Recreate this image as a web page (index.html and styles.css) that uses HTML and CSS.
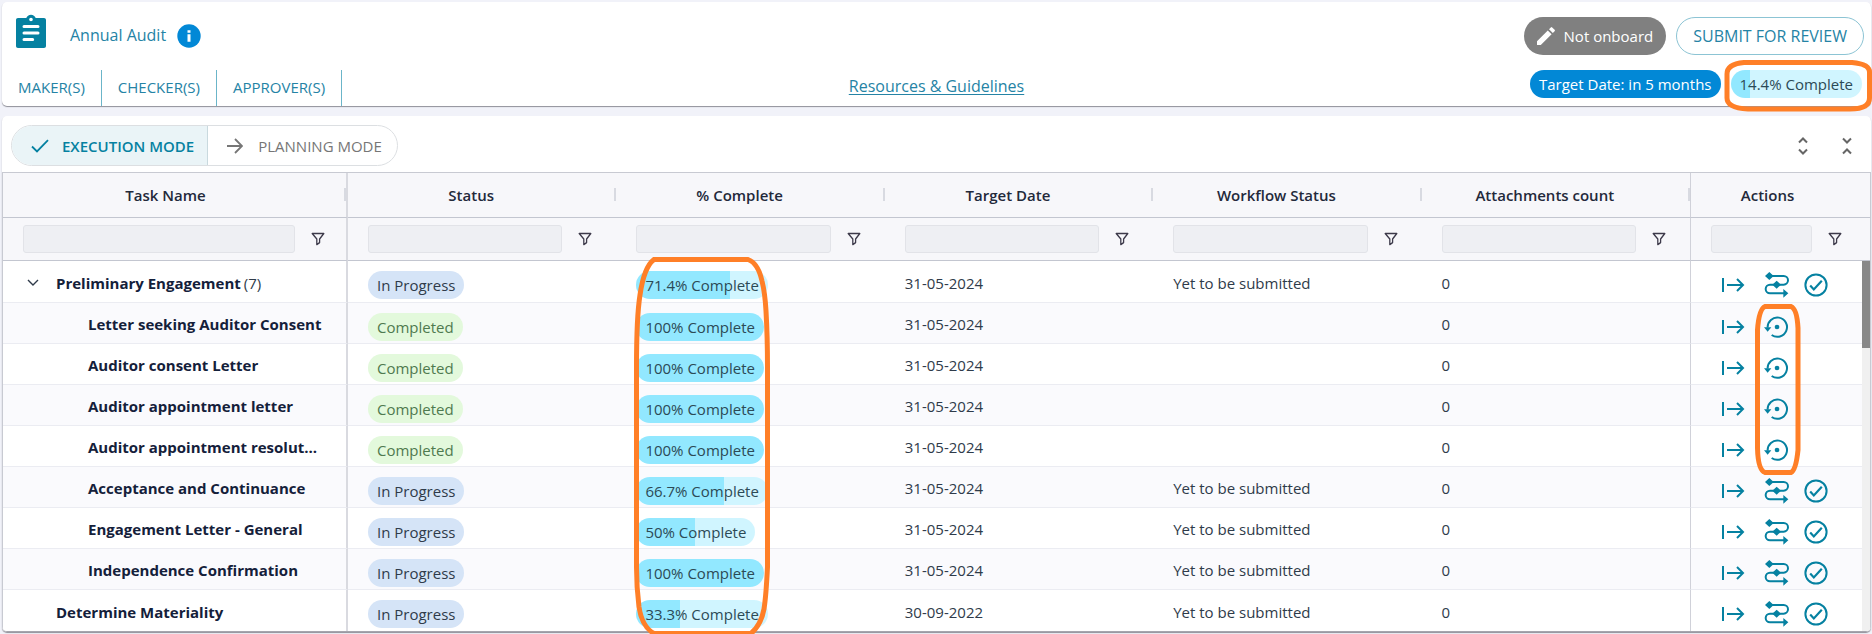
FILE: index.html
```html
<!DOCTYPE html>
<html lang="en">
<head>
  <meta charset="UTF-8" />
  <meta name="viewport" content="width=device-width, initial-scale=1" />
  <title>Annual Audit</title>
  <link rel="stylesheet" href="styles.css">
</head>
<body>

  <!-- icons -->
  <svg class="sprite" aria-hidden="true">
    <symbol id="i-filter" viewBox="0 0 14 14">
      <path d="M1.2 1.5h11.6L8.6 7v3.6L5.8 12.6V7z" fill="none" stroke="currentColor" stroke-width="1.3" stroke-linejoin="round"/>
    </symbol>
    <symbol id="i-start" viewBox="0 0 24 16">
      <path d="M2 1v14M6 8h16M16 2l6 6-6 6" fill="none" stroke="currentColor" stroke-width="2"/>
    </symbol>
    <symbol id="i-route" viewBox="-3 -1 78 78">
      <path d="M13 11h43a13 13 0 0 1 0 26H15a13 13 0 0 0 0 26h43" fill="none" stroke="currentColor" stroke-width="6"/>
      <path d="M13 -1l13 12-13 12L0 11zM35 25l13 12-13 12-13-12zM55 50l15 13-15 13z" fill="currentColor"/>
    </symbol>
    <symbol id="i-check" viewBox="-1 -1 26 26">
      <circle cx="12" cy="12" r="10.6" fill="none" stroke="currentColor" stroke-width="2"/>
      <path d="M6.2 12.6l3.6 3.8 8-8.6" fill="none" stroke="currentColor" stroke-width="2.2"/>
    </symbol>
    <symbol id="i-restore" viewBox="1 -7 78 78">
      <path d="M12 34a29 29 0 1 1 12 22" fill="none" stroke="currentColor" stroke-width="6"/>
      <path d="M1 33h22L12 46z" fill="currentColor"/>
      <circle cx="40" cy="32" r="7" fill="currentColor"/>
    </symbol>
  </svg>

  <header class="card header">
    <div class="header-top">
      <svg class="logo" viewBox="0 0 24 24">
        <path d="M19.800 3h-4.980C14.400 1.840 13.300 1 12 1s-2.400.840-2.820 2H4.200C3.500 3 3 3.500 3 4.200v15.600c0 .700.500 1.200 1.200 1.200h15.600c.700 0 1.200-.500 1.200-1.200V4.200c0-.700-.500-1.200-1.200-1.200zM12 2.800a1.100 1.100 0 1 1 0 2.200 1.100 1.100 0 0 1 0-2.200z" fill="#0581a1" fill-rule="evenodd"/>
        <path d="M7.800 8.100h8.400M7.800 12h8.400M7.800 15.900h5.200" stroke="#fff" stroke-width="1.800" stroke-linecap="round"/>
      </svg>
      <h1>Annual Audit</h1>
      <svg class="info" viewBox="0 0 24 24" role="img" aria-label="Info">
        <circle cx="12" cy="12" r="11.700" fill="#0288d6"/>
        <path d="M10.500 6.200h3v2.600h-3zM10.500 10.200h3v7.600h-3z" fill="#fff"/>
      </svg>
      <div class="header-actions">
        <button class="btn btn-grey">
          <svg width="18" height="18" viewBox="0 0 18 18"><path d="M0 14.200V18h3.800L14.600 7.200l-3.800-3.800zM17.600 4.200a1 1 0 0 0 0-1.400L15.200.400a1 1 0 0 0-1.400 0L12 2.200 15.800 6z" fill="#fff"/></svg>
          Not onboard
        </button>
        <button class="btn btn-outline">SUBMIT FOR REVIEW</button>
      </div>
    </div>
    <div class="header-bottom">
      <nav class="roles">
        <button>MAKER(S)</button>
        <button>CHECKER(S)</button>
        <button>APPROVER(S)</button>
      </nav>
      <a class="resources" href="#">Resources &amp; Guidelines</a>
      <div class="header-chips">
        <span class="chip chip-date">Target Date: in 5 months</span>
        <span class="chip chip-pct" style="--pct: 14.4%">14.4% Complete</span>
      </div>
    </div>
  </header>

  <main class="card tasks">
    <div class="toolbar">
      <div class="modes">
        <button class="active">
          <svg width="18" height="14" viewBox="0 0 18 14"><path d="M1 7.500l5 5L17 1.200" fill="none" stroke="currentColor" stroke-width="1.800"/></svg>
          EXECUTION MODE
        </button>
        <button>
          <svg width="16" height="16" viewBox="0 0 16 16"><path d="M0 8h14.500M8 1l7 7-7 7" fill="none" stroke="currentColor" stroke-width="1.800"/></svg>
          PLANNING MODE
        </button>
      </div>
      <div class="expanders">
        <button aria-label="Expand all"><svg width="10" height="18" viewBox="0 0 10 18"><path d="M1 5.500l4-4 4 4M1 12.500l4 4 4-4" fill="none" stroke="currentColor" stroke-width="2"/></svg></button>
        <button aria-label="Collapse all"><svg width="10" height="18" viewBox="0 0 10 18"><path d="M1 1.500l4 4 4-4M1 16.500l4-4 4 4" fill="none" stroke="currentColor" stroke-width="2"/></svg></button>
      </div>
    </div>

    <div class="grid">
      <table>
        <colgroup>
          <col class="col-name"><col><col><col><col><col><col class="col-actions">
        </colgroup>
        <thead>
          <tr class="titles">
            <th>Task Name</th><th>Status</th><th>% Complete</th><th>Target Date</th><th>Workflow Status</th><th>Attachments count</th><th>Actions</th>
          </tr>
          <tr class="filters">
            <td><div class="filter"><input type="text" aria-label="Filter task name"><button aria-label="Open filter"><svg><use href="#i-filter"/></svg></button></div></td>
            <td><div class="filter"><input type="text" aria-label="Filter status"><button aria-label="Open filter"><svg><use href="#i-filter"/></svg></button></div></td>
            <td><div class="filter"><input type="text" aria-label="Filter % complete"><button aria-label="Open filter"><svg><use href="#i-filter"/></svg></button></div></td>
            <td><div class="filter"><input type="text" aria-label="Filter target date"><button aria-label="Open filter"><svg><use href="#i-filter"/></svg></button></div></td>
            <td><div class="filter"><input type="text" aria-label="Filter workflow status"><button aria-label="Open filter"><svg><use href="#i-filter"/></svg></button></div></td>
            <td><div class="filter"><input type="text" aria-label="Filter attachments count"><button aria-label="Open filter"><svg><use href="#i-filter"/></svg></button></div></td>
            <td><div class="filter"><input type="text" aria-label="Filter actions"><button aria-label="Open filter"><svg><use href="#i-filter"/></svg></button></div></td>
          </tr>
        </thead>
        <tbody>
          <tr class="parent">
            <td>
              <div class="task">
                <button class="toggle" aria-label="Collapse"><svg width="12" height="8" viewBox="0 0 12 8"><path d="M1 1l5 5 5-5" fill="none" stroke="currentColor" stroke-width="1.400"/></svg></button>
                <span class="name">Preliminary Engagement</span><span class="count">(7)</span>
              </div>
            </td>
            <td><span class="chip chip-progress">In Progress</span></td>
            <td><span class="chip chip-pct" style="--pct: 71.4%">71.4% Complete</span></td>
            <td>31-05-2024</td><td>Yet to be submitted</td><td>0</td>
            <td><div class="actions"><button aria-label="Open"><svg class="start"><use href="#i-start"/></svg></button><button aria-label="Workflow"><svg><use href="#i-route"/></svg></button><button aria-label="Complete"><svg><use href="#i-check"/></svg></button></div></td>
          </tr>
          <tr>
            <td><div class="task"><span class="name">Letter seeking Auditor Consent</span></div></td>
            <td><span class="chip chip-done">Completed</span></td>
            <td><span class="chip chip-pct" style="--pct: 100%">100% Complete</span></td>
            <td>31-05-2024</td><td></td><td>0</td>
            <td><div class="actions"><button aria-label="Open"><svg class="start"><use href="#i-start"/></svg></button><button aria-label="Reopen"><svg><use href="#i-restore"/></svg></button></div></td>
          </tr>
          <tr>
            <td><div class="task"><span class="name">Auditor consent Letter</span></div></td>
            <td><span class="chip chip-done">Completed</span></td>
            <td><span class="chip chip-pct" style="--pct: 100%">100% Complete</span></td>
            <td>31-05-2024</td><td></td><td>0</td>
            <td><div class="actions"><button aria-label="Open"><svg class="start"><use href="#i-start"/></svg></button><button aria-label="Reopen"><svg><use href="#i-restore"/></svg></button></div></td>
          </tr>
          <tr>
            <td><div class="task"><span class="name">Auditor appointment letter</span></div></td>
            <td><span class="chip chip-done">Completed</span></td>
            <td><span class="chip chip-pct" style="--pct: 100%">100% Complete</span></td>
            <td>31-05-2024</td><td></td><td>0</td>
            <td><div class="actions"><button aria-label="Open"><svg class="start"><use href="#i-start"/></svg></button><button aria-label="Reopen"><svg><use href="#i-restore"/></svg></button></div></td>
          </tr>
          <tr>
            <td><div class="task"><span class="name">Auditor appointment resolut...</span></div></td>
            <td><span class="chip chip-done">Completed</span></td>
            <td><span class="chip chip-pct" style="--pct: 100%">100% Complete</span></td>
            <td>31-05-2024</td><td></td><td>0</td>
            <td><div class="actions"><button aria-label="Open"><svg class="start"><use href="#i-start"/></svg></button><button aria-label="Reopen"><svg><use href="#i-restore"/></svg></button></div></td>
          </tr>
          <tr>
            <td><div class="task"><span class="name">Acceptance and Continuance</span></div></td>
            <td><span class="chip chip-progress">In Progress</span></td>
            <td><span class="chip chip-pct" style="--pct: 66.7%">66.7% Complete</span></td>
            <td>31-05-2024</td><td>Yet to be submitted</td><td>0</td>
            <td><div class="actions"><button aria-label="Open"><svg class="start"><use href="#i-start"/></svg></button><button aria-label="Workflow"><svg><use href="#i-route"/></svg></button><button aria-label="Complete"><svg><use href="#i-check"/></svg></button></div></td>
          </tr>
          <tr>
            <td><div class="task"><span class="name">Engagement Letter - General</span></div></td>
            <td><span class="chip chip-progress">In Progress</span></td>
            <td><span class="chip chip-pct" style="--pct: 50%">50% Complete</span></td>
            <td>31-05-2024</td><td>Yet to be submitted</td><td>0</td>
            <td><div class="actions"><button aria-label="Open"><svg class="start"><use href="#i-start"/></svg></button><button aria-label="Workflow"><svg><use href="#i-route"/></svg></button><button aria-label="Complete"><svg><use href="#i-check"/></svg></button></div></td>
          </tr>
          <tr>
            <td><div class="task"><span class="name">Independence Confirmation</span></div></td>
            <td><span class="chip chip-progress">In Progress</span></td>
            <td><span class="chip chip-pct" style="--pct: 100%">100% Complete</span></td>
            <td>31-05-2024</td><td>Yet to be submitted</td><td>0</td>
            <td><div class="actions"><button aria-label="Open"><svg class="start"><use href="#i-start"/></svg></button><button aria-label="Workflow"><svg><use href="#i-route"/></svg></button><button aria-label="Complete"><svg><use href="#i-check"/></svg></button></div></td>
          </tr>
          <tr class="parent">
            <td><div class="task"><span class="name">Determine Materiality</span></div></td>
            <td><span class="chip chip-progress">In Progress</span></td>
            <td><span class="chip chip-pct" style="--pct: 33.3%">33.3% Complete</span></td>
            <td>30-09-2022</td><td>Yet to be submitted</td><td>0</td>
            <td><div class="actions"><button aria-label="Open"><svg class="start"><use href="#i-start"/></svg></button><button aria-label="Workflow"><svg><use href="#i-route"/></svg></button><button aria-label="Complete"><svg><use href="#i-check"/></svg></button></div></td>
          </tr>
        </tbody>
      </table>
      <div class="scrollbar"><div class="thumb"></div></div>
    </div>
  </main>

  <!-- highlight marks -->
  <svg class="mark mark-total" viewBox="0 0 148 52"><path d="M20 2.500H128Q145.500 4 145.500 12V38Q145.500 49 126 49H24Q3 48 3 38V14Q3 4 20 2.500Z"/></svg>
  <svg class="mark mark-pct" viewBox="0 0 136 380"><path d="M20 2.500H114Q124 6 128 24Q131 36 132 54Q133.500 80 133.500 110V310Q132 340 130 352Q127 368 117 376.500H20Q8 370 5 350Q2.500 330 2.500 310V110Q2.500 60 6 38Q10 10 20 2.500Z"/></svg>
  <svg class="mark mark-reopen" viewBox="0 0 46 172"><path d="M10 2.500H36Q42 5 43 24V146Q41 166 36 168.500H10Q3 166 2.500 144V26Q4 5 10 2.500Z"/></svg>

</body>
</html>
```
FILE: styles.css
```css
* {
  box-sizing: border-box;
}

body {
  margin: 0;
  padding: 2px 1px 2px 2px;
  height: 100vh;
  display: flex;
  flex-direction: column;
  gap: 10px;
  position: relative;
  overflow: hidden;
  font-family: "Open Sans", "Noto Sans", sans-serif;
  font-size: 15px;
  color: #2f3b4a;
  background: #f1f2f9;
}

button {
  font: inherit;
  color: inherit;
  background: none;
  border: 0;
  padding: 0;
  cursor: pointer;
}

svg {
  display: block;
}

.sprite {
  position: absolute;
  width: 0;
  height: 0;
}

.card {
  background: #fff;
  border-radius: 5px;
  box-shadow: 0 1px 1px #8f8f98;
}

/* Header */
.header-top {
  display: flex;
  align-items: center;
  height: 68px;
  padding: 0 7px 0 9px;
}

.logo {
  width: 40px;
  height: 40px;
  margin-bottom: 6px;
}

h1 {
  margin: 0 11px 2px 19px;
  font-size: 16px;
  font-weight: 400;
  color: #2583a5;
}

.info {
  width: 24px;
  height: 24px;
}

.header-actions {
  display: flex;
  gap: 10px;
  margin-left: auto;
}

.btn {
  display: flex;
  align-items: center;
  height: 38px;
  border-radius: 19px;
}

.btn-grey {
  gap: 9px;
  padding: 0 13px;
  color: #fff;
  background: #808080;
}

.btn-outline {
  padding: 0 16px;
  font-size: 16px;
  color: #2583a5;
  border: 1px solid #8cc4d4;
}

.header-bottom {
  display: grid;
  grid-template-columns: 1fr auto 1fr;
  height: 36px;
}

.roles {
  display: flex;
}

.roles button {
  padding: 0 16px 2px;
  color: #2583a5;
  border-right: 1px solid #6bb5c9;
}

.resources {
  padding-top: 5px;
  font-size: 16px;
  color: #2583a5;
  text-underline-offset: 2px;
}

.header-chips {
  display: flex;
  justify-content: flex-end;
  gap: 10px;
  padding-right: 9px;
}

.chip {
  display: inline-block;
  height: 28px;
  padding: 0 9px;
  border-radius: 14px;
  line-height: 28px;
  white-space: nowrap;
}

.chip-date {
  color: #fff;
  background: #0288d6;
}

.chip-pct {
  color: #2c4a56;
  background: linear-gradient(to right, #92e8ff var(--pct), #d0f5ff var(--pct));
}

.chip-progress {
  background: #d5e4f7;
}

.chip-done {
  color: #4f7a4f;
  background: #e3f9dc;
}

/* Toolbar */
.tasks {
  flex: 1;
  min-height: 0;
  display: flex;
  flex-direction: column;
  overflow: hidden;
}

.toolbar {
  display: flex;
  align-items: center;
  justify-content: space-between;
  padding: 9px 19px 6px 9px;
}

.modes {
  display: flex;
  height: 41px;
  border: 1px solid #dcdfe2;
  border-radius: 21px;
  overflow: hidden;
}

.modes button {
  display: flex;
  align-items: center;
  gap: 15px;
  padding: 0 15px 0 19px;
  color: #767676;
}

.modes .active {
  gap: 13px;
  padding-right: 13px;
  font-weight: 600;
  color: #0581a1;
  background: #eaf4f7;
  border-right: 1px solid #c9d9de;
}

.expanders {
  display: flex;
  gap: 34px;
  color: #666;
}

/* Grid */
.grid {
  flex: 1;
  min-height: 0;
  position: relative;
  overflow: hidden;
  border: 1px solid #c8cad2;
  border-bottom-color: #a5a5ad;
  border-radius: 0 0 4px 4px;
}

table {
  width: 100%;
  table-layout: fixed;
  border-collapse: separate;
  border-spacing: 0;
}

.col-name {
  width: 345px;
}

.col-actions {
  width: 180px;
}

th, td {
  padding: 0 24px 0 20px;
  text-align: left;
  white-space: nowrap;
}

th {
  position: relative;
  height: 45px;
  padding: 0 22px 0 0;
  text-align: center;
  font-weight: 600;
  color: #23293a;
  background: #f7f7fa;
  border-bottom: 1px solid #c3c6d0;
}

/* resize handle */
th:not(:last-child)::after {
  content: "";
  position: absolute;
  top: 15px;
  right: 0;
  width: 2px;
  height: 13px;
  background: #d8dae1;
}

th:first-child {
  padding-right: 18px;
}

th:last-child {
  padding-right: 26px;
}

.filters td {
  height: 43px;
  background: #f7f7fa;
  border-bottom: 1px solid #c3c6d0;
}

.filter {
  display: flex;
  align-items: center;
  gap: 16px;
}

.filter input {
  flex: 1;
  min-width: 0;
  height: 28px;
  font: inherit;
  background: #eeeff3;
  border: 1px solid #e2e3e8;
  border-radius: 3px;
}

.filter svg {
  width: 14px;
  height: 14px;
  color: #3d3a4a;
}

.filters td:first-child {
  padding-right: 21px;
}

.filters td:last-child {
  padding-right: 28px;
}

tr > :first-child {
  border-right: 2px solid #d9dae0;
}

tr > :last-child {
  border-left: 1px solid #d0d1d9;
}

tbody td {
  height: 41px;
  padding-top: 2px;
  border-bottom: 1px solid #ebecf2;
}

tbody .parent td {
  height: 42px;
}

tbody tr:nth-child(even) {
  background: #fafafd;
}

tbody .chip {
  display: block;
  width: fit-content;
  margin-top: 5px;
}

.task {
  display: flex;
  align-items: center;
  padding-left: 65px;
}

.parent .task {
  position: relative;
  padding-left: 33px;
}

.toggle {
  position: absolute;
  left: 4px;
}

.name {
  font-weight: 700;
  color: #14203a;
}

.count {
  margin-left: 3px;
}

.actions {
  display: flex;
  align-items: center;
  gap: 13px;
  padding: 5px 0 0 9px;
  color: #0581a1;
}

.actions svg {
  width: 26px;
  height: 26px;
}

.actions .start {
  height: 16px;
  margin-right: 5px;
}

.scrollbar {
  position: absolute;
  top: 88px;
  right: 0;
  bottom: 0;
  width: 8px;
  background: #f0f0f0;
}

.thumb {
  height: 87px;
  background: #888;
}

/* Highlight marks */
.mark {
  position: absolute;
  fill: none;
  stroke: #ff7f27;
  stroke-width: 5px;
  pointer-events: none;
}

.mark-total {
  top: 60px;
  right: 0;
  width: 148px;
}

.mark-pct {
  top: 257px;
  left: 634px;
  width: 136px;
}

.mark-reopen {
  top: 304px;
  right: 71px;
  width: 46px;
}
```
